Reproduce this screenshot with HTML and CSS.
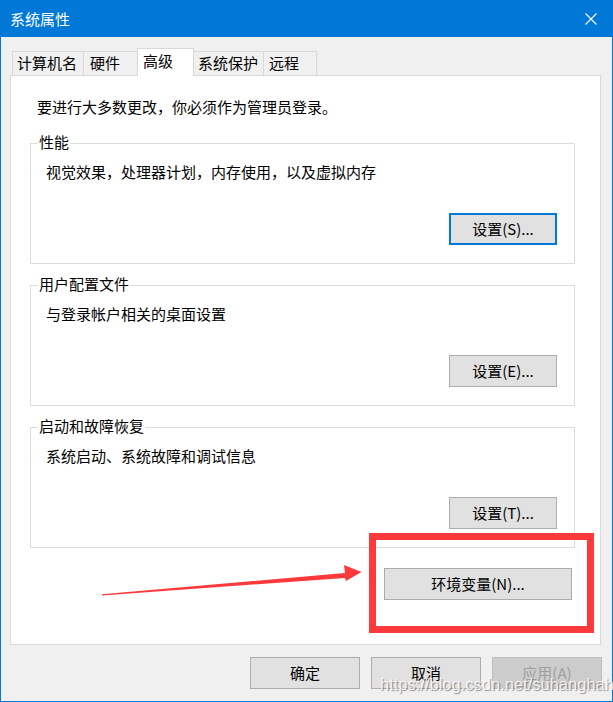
FILE: index.html
```html
<!DOCTYPE html>
<html lang="zh-CN">
<head>
<meta charset="utf-8">
<title>系统属性</title>
<link rel="stylesheet" href="styles.css">
</head>
<body>
<div class="window">
  <div class="titlebar">
    <span class="title">系统属性</span>
    <svg class="close" width="12" height="12" viewBox="0 0 12 12"><path d="M0.5 0.5 L11.5 11.5 M11.5 0.5 L0.5 11.5" stroke="#fff" stroke-width="1.1" fill="none"/></svg>
  </div>
  <div class="frame">
    <div class="tabs">
      <div class="tab tab-name">计算机名</div>
      <div class="tab tab-hw">硬件</div>
      <div class="tab tab-adv tab-active">高级</div>
      <div class="tab tab-prot">系统保护</div>
      <div class="tab tab-remote">远程</div>
    </div>
    <div class="panel">
      <p class="intro">要进行大多数更改，你必须作为管理员登录。</p>
      <div class="group">
        <div class="group-title">性能</div>
        <div class="group-desc">视觉效果，处理器计划，内存使用，以及虚拟内存</div>
        <div class="group-actions"><button class="btn btn-settings btn-default">设置(S)...</button></div>
      </div>
      <div class="group">
        <div class="group-title">用户配置文件</div>
        <div class="group-desc">与登录帐户相关的桌面设置</div>
        <div class="group-actions"><button class="btn btn-settings">设置(E)...</button></div>
      </div>
      <div class="group">
        <div class="group-title">启动和故障恢复</div>
        <div class="group-desc">系统启动、系统故障和调试信息</div>
        <div class="group-actions"><button class="btn btn-settings">设置(T)...</button></div>
      </div>
      <div class="env-row"><button class="btn btn-env">环境变量(N)...</button></div>
    </div>
    <div class="footer">
      <button class="btn btn-dialog">确定</button>
      <button class="btn btn-dialog">取消</button>
      <button class="btn btn-dialog btn-disabled">应用(A)</button>
    </div>
  </div>
  <div class="annot-box"></div>
  <svg class="annot-arrow" width="265" height="40" viewBox="0 0 265 40"><polygon points="2,34.2 245,13 244,5 261.5,12 246,21 245,18 2,35.4" fill="#fc393b"/></svg>
  <div class="watermark">https://blog.csdn.net/suhanghah</div>
</div>
</body>
</html>
```

FILE: styles.css
```css
body {
  margin: 0;
  font-family: "Noto Sans CJK SC", "Noto Sans", sans-serif;
  font-size: 15px;
  color: #000;
}

.window {
  position: relative;
  width: 613px;
  height: 702px;
  display: flex;
  flex-direction: column;
  background: #f0f0f0;
  overflow: hidden;
}

.titlebar {
  flex: none;
  height: 37px;
  background: #0078d7;
  color: #fff;
  display: flex;
  align-items: center;
  justify-content: space-between;
  padding: 0 16px 0 10px;
  box-sizing: border-box;
}

.title {
  line-height: 20px;
  margin-top: 1px;
}

.close {
  display: block;
}

.frame {
  flex: 1;
  display: flex;
  flex-direction: column;
  border: 1px solid #0078d7;
  border-top: none;
}

.tabs {
  display: flex;
  align-items: flex-end;
  padding: 11px 0 0 11px;
}

.tab {
  box-sizing: border-box;
  height: 24px;
  border: 1px solid #d9d9d9;
  border-bottom: none;
  margin-right: -1px;
  background: #f0f0f0;
  padding-left: 4px;
  line-height: 21px;
  white-space: nowrap;
}

.tab-name { width: 72px; }
.tab-hw { width: 55px; padding-left: 6px; }
.tab-adv { width: 57px; padding-left: 5px; }
.tab-prot { width: 71px; }
.tab-remote { width: 54px; padding-left: 5px; }

.tab-active {
  height: 28px;
  margin-bottom: -1px;
  background: #fff;
  line-height: 24px;
  position: relative;
  z-index: 1;
}

.panel {
  box-sizing: border-box;
  margin-left: 9px;
  width: 591px;
  height: 570px;
  border: 1px solid #d9d9d9;
  background: #fff;
  padding-top: 21px;
}

.intro {
  margin: 0 0 0 26px;
  line-height: 20px;
}

.group {
  margin: 26px 25px 0 19px;
  border: 1px solid #dcdcdc;
  padding: 0 17px 18px 0;
}

.group + .group {
  margin-top: 21px;
}

.group-title {
  width: fit-content;
  margin: -12px 0 0 7px;
  padding: 0 1px;
  background: #fff;
  line-height: 20px;
}

.group-desc {
  margin: 10px 0 0 15px;
  line-height: 20px;
}

.group-actions {
  display: flex;
  justify-content: flex-end;
  margin-top: 31px;
}

.btn {
  box-sizing: border-box;
  height: 32px;
  border: 1px solid #adadad;
  background: #e1e1e1;
  color: #000;
  font: inherit;
  line-height: 20px;
  padding: 0 0 1px;
  margin: 0;
  border-radius: 0;
}

.btn-settings {
  width: 108px;
}

.btn-default {
  border: 2px solid #0078d7;
}

.env-row {
  display: flex;
  justify-content: flex-end;
  margin-top: 20px;
  padding-right: 28px;
}

.btn-env {
  width: 188px;
}

.footer {
  display: flex;
  justify-content: flex-end;
  gap: 11px;
  margin-top: 12px;
  padding-right: 10px;
}

.btn-dialog {
  width: 110px;
}

.btn-disabled {
  background: #cccccc;
  border-color: #bfbfbf;
  color: #a0a0a0;
}

.annot-box {
  position: absolute;
  left: 369px;
  top: 533px;
  width: 225px;
  height: 100px;
  box-sizing: border-box;
  border: 7px solid #fc393b;
}

.annot-arrow {
  position: absolute;
  left: 100px;
  top: 560px;
}

.watermark {
  position: absolute;
  left: 380px;
  top: 675px;
  font-family: "Liberation Sans", Arial, sans-serif;
  font-size: 16.5px;
  line-height: 19px;
  color: rgba(255, 255, 255, 0.85);
  text-shadow: 1px 1px 1px rgba(0, 0, 0, 0.4);
  white-space: nowrap;
  pointer-events: none;
}
```
